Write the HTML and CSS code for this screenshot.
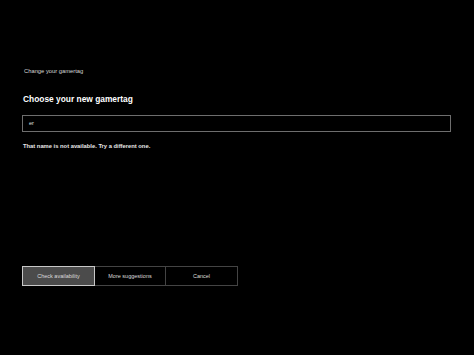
FILE: index.html
```html
<!DOCTYPE html>
<html lang="en">
<head>
  <meta charset="UTF-8" />
  <title>Change your gamertag</title>
  <link rel="stylesheet" href="styles.css">
</head>
<body>
  <div class="page">
    <div class="page-title">Change your gamertag</div>
    <h1 class="heading">Choose your new gamertag</h1>
    <div class="field">er</div>
    <div class="error">That name is not available. Try a different one.</div>

    <div class="actions">
      <button class="btn btn-focus">Check availability</button>
      <button class="btn">More suggestions</button>
      <button class="btn">Cancel</button>
    </div>
  </div>
</body>
</html>
```

FILE: styles.css
```css
/* Reset */
* {
  margin: 0;
  padding: 0;
  box-sizing: border-box;
}

html, body {
  height: 100%;
  background-color: #000;
  color: #fff;
  font-family: 'Liberation Sans', Arial, sans-serif;
  overflow: hidden;
}

.page {
  padding: 67px 23px 0 22px;
}

.page-title {
  font-size: 5.8px;
  line-height: 8px;
  color: #d8d8d8;
  padding-left: 2px;
}

.heading {
  margin-top: 19px;
  font-size: 8.4px;
  line-height: 10px;
  font-weight: bold;
  padding-left: 1px;
}

.field {
  margin-top: 11px;
  height: 17px;
  border: 1px solid #6e6e6e;
  font-size: 5.5px;
  line-height: 15px;
  padding-left: 6px;
  color: #e0e0e0;
}

.error {
  margin-top: 10px;
  font-size: 5.8px;
  line-height: 8px;
  font-weight: bold;
  color: #e8e8e8;
  padding-left: 1px;
}

.actions {
  display: flex;
  margin-top: 116px;
}

.btn {
  height: 20px;
  background: #000;
  color: #dcdcdc;
  border: 1px solid #444;
  font-family: 'Liberation Sans', Arial, sans-serif;
  font-size: 5.5px;
}

.btn:nth-child(1) { width: 73px; }
.btn:nth-child(2) { width: 72px; margin-left: -1px; }
.btn:nth-child(3) { width: 73px; margin-left: -1px; }

.btn-focus {
  background: #4b4b4b;
  border-color: #c8c8c8;
  position: relative;
  z-index: 1;
}
```
